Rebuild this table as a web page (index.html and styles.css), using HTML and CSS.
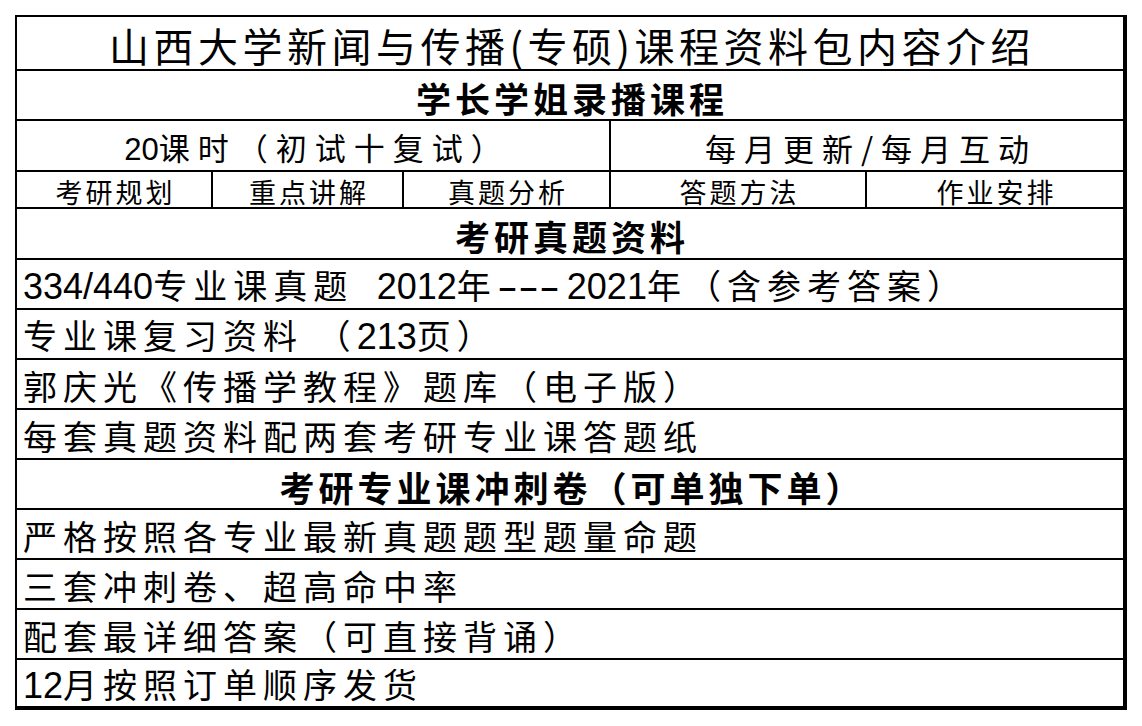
FILE: index.html
```html
<!DOCTYPE html>
<html lang="zh-CN">
<head>
<meta charset="utf-8">
<title>山西大学新闻与传播(专硕)课程资料包内容介绍</title>
<link rel="stylesheet" href="styles.css">
</head>
<body>
<div class="sheet">
  <div class="row r-title"><div class="cell center title"><span>山西大学新闻与传播(专硕)课程资料包内容介绍</span></div></div>
  <div class="row r-head"><div class="cell center head"><span>学长学姐录播课程</span></div></div>
  <div class="row r-split2">
    <div class="cell center sub"><span><span class="n sn">20</span>课时（初试十复试）</span></div>
    <div class="cell center sub"><span>每月更新/每月互动</span></div>
  </div>
  <div class="row r-split5">
    <div class="cell center small"><span>考研规划</span></div>
    <div class="cell center small"><span>重点讲解</span></div>
    <div class="cell center small"><span>真题分析</span></div>
    <div class="cell center small"><span>答题方法</span></div>
    <div class="cell center small"><span>作业安排</span></div>
  </div>
  <div class="row r-head2"><div class="cell center head"><span>考研真题资料</span></div></div>
  <div class="row item"><div class="cell text"><span><span class="n">334/440</span>专业课真题 <span class="n gap">2012</span>年<span class="n dash">---</span><span class="n">2021</span>年（含参考答案）</span></div></div>
  <div class="row item"><div class="cell text"><span>专业课复习资料 （<span class="n">213</span>页）</span></div></div>
  <div class="row item"><div class="cell text"><span>郭庆光《传播学教程》题库（电子版）</span></div></div>
  <div class="row item"><div class="cell text"><span>每套真题资料配两套考研专业课答题纸</span></div></div>
  <div class="row r-head"><div class="cell center head"><span>考研专业课冲刺卷（可单独下单）</span></div></div>
  <div class="row item"><div class="cell text"><span>严格按照各专业最新真题题型题量命题</span></div></div>
  <div class="row item"><div class="cell text"><span>三套冲刺卷、超高命中率</span></div></div>
  <div class="row item"><div class="cell text"><span>配套最详细答案（可直接背诵）</span></div></div>
  <div class="row item last"><div class="cell text"><span><span class="n">12</span>月按照订单顺序发货</span></div></div>
</div>
</body>
</html>
```

FILE: styles.css
```css
html, body {
  margin: 0;
  padding: 0;
  background: #fff;
}

body {
  font-family: "Noto Sans CJK SC", "Noto Sans", sans-serif;
  color: #000;
}

.sheet {
  margin: 15px 0 0 15px;
  width: 1112px;
  box-sizing: border-box;
  border-top: 2px solid #000;
  border-left: 2px solid #000;
  border-right: 4px solid #000;
}

.row {
  box-sizing: border-box;
  border-bottom: 2px solid #000;
  display: flex;
}

.row.last {
  border-bottom-width: 4px;
  height: 50px;
}

.cell {
  box-sizing: border-box;
  display: flex;
  align-items: center;
  line-height: 1;
  white-space: pre;
  flex: 1 1 auto;
}

.center {
  justify-content: center;
}

.r-title { height: 54px; }
.r-head { height: 50px; }
.r-head2 { height: 51px; }
.item { height: 50px; }

.r-split2 {
  height: 51px;
  display: grid;
  grid-template-columns: 594px 512px;
}

.r-split5 {
  height: 37px;
  display: grid;
  grid-template-columns: 196px 191px 207px 256px 256px;
}

.r-split2 .cell,
.r-split5 .cell {
  border-right: 2px solid #000;
}

.r-split2 .cell:last-child,
.r-split5 .cell:last-child {
  border-right: none;
}

.title {
  font-size: 40px;
  letter-spacing: 4.5px;
  padding-left: 4px;
  padding-top: 3px;
}

.head {
  font-size: 35px;
  font-weight: 700;
  letter-spacing: 4px;
  padding-left: 4px;
  padding-top: 4px;
}

.sub {
  font-size: 31px;
  letter-spacing: 8px;
  padding-left: 8px;
  padding-top: 4px;
}

.small {
  font-size: 27px;
  letter-spacing: 3px;
  padding-left: 3px;
  padding-top: 4px;
}

.text {
  font-size: 34px;
  letter-spacing: 6px;
  padding-left: 6px;
  padding-top: 4px;
}

.n {
  font-family: "Liberation Sans", Arial, sans-serif;
  font-size: 36px;
  letter-spacing: 0;
}

.n.sn {
  font-size: 31px;
}

.n.gap {
  margin-left: 10px;
}

.n.dash {
  display: inline-block;
  letter-spacing: 0;
  transform: scaleX(1.75);
  transform-origin: left center;
  margin-right: 34px;
}
```
